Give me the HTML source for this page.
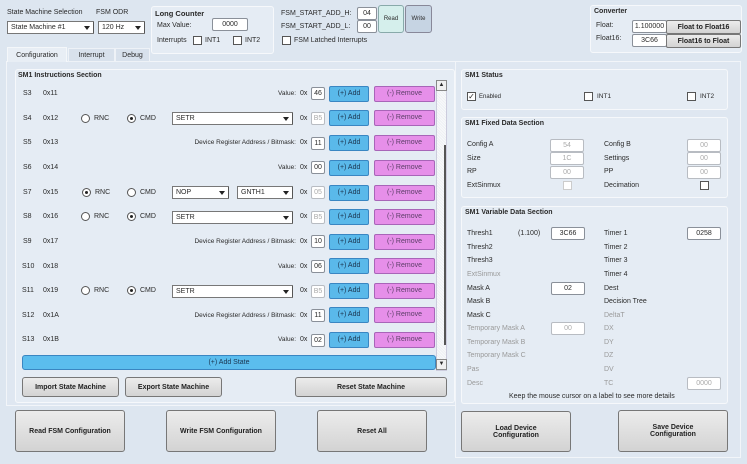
<!DOCTYPE html>
<html><head><meta charset="utf-8"><style>
*{box-sizing:border-box;margin:0;padding:0}
body{width:747px;height:464px;background:#dde6f0;font-family:"Liberation Sans",sans-serif;font-size:7px;color:#2a2a2a;position:relative;overflow:hidden}
.a{position:absolute;white-space:nowrap}
.r{position:absolute;white-space:nowrap;right:451px;font-size:6.5px}
.grp{position:absolute;background:#e5ecf4;border:1px solid #f6f8fb;border-radius:3px}
.b{font-weight:bold}
.in{position:absolute;background:#fff;border:1px solid #8a9099;border-radius:2px;text-align:center;font-size:7px;line-height:11px;height:13px}
.dis{color:#aaa;border-color:#b8bcc2}
.cb{position:absolute;width:9px;height:9px;background:#fff;border:1px solid #555}
.combo{position:absolute;background:#fff;border:1px solid #777;height:13px;font-size:7px;line-height:11px;padding-left:3px}
.combo:after{content:"";position:absolute;right:3px;top:4px;border-left:3px solid transparent;border-right:3px solid transparent;border-top:4px solid #222}
.combo:before{content:"";position:absolute;right:-3px;top:0;width:2px;height:11px;border-left:1px solid #555}
.add{position:absolute;width:40px;height:16px;background:#5ab9ea;border:1px solid #3a86c2;border-radius:2px;color:#1b3550;text-align:center;line-height:14px;font-size:7px}
.rem{position:absolute;width:61px;height:16px;background:#e68fe9;border:1px solid #a865b8;border-radius:2px;color:#5a3d66;text-align:center;line-height:14px;font-size:7px}
.rad{position:absolute;width:9px;height:9px;border-radius:50%;background:#fff;border:1px solid #555}
.rad.on:after{content:"";position:absolute;left:2px;top:2px;width:3px;height:3px;border-radius:50%;background:#222}
.btn{position:absolute;background:linear-gradient(#ececec,#d3d3d3);border:1px solid #777;border-radius:3px;font-weight:bold;text-align:center;font-size:7px;color:#222;display:flex;align-items:center;justify-content:center}
.g{color:#9a9a9a}
</style></head><body>

<div class="a" style="left:7px;top:9px">State Machine Selection</div>
<div class="a" style="left:96px;top:9px">FSM ODR</div>
<div class="combo" style="left:7px;top:21px;width:87px">State Machine #1</div>
<div class="combo" style="left:98px;top:21px;width:47px">120 Hz</div>

<div class="grp" style="left:151px;top:6px;width:123px;height:48px"></div>
<div class="a b" style="left:155px;top:9px;font-size:7.5px">Long Counter</div>
<div class="a" style="left:157px;top:22px">Max Value:</div>
<div class="in" style="left:212px;top:18px;width:36px">0000</div>
<div class="a" style="left:157px;top:37px">Interrupts</div>
<div class="cb" style="left:193px;top:36px"></div><div class="a" style="left:205px;top:37px">INT1</div>
<div class="cb" style="left:233px;top:36px"></div><div class="a" style="left:245px;top:37px">INT2</div>

<div class="a" style="left:281px;top:10px">FSM_START_ADD_H:</div>
<div class="a" style="left:281px;top:23px">FSM_START_ADD_L:</div>
<div class="in" style="left:357px;top:7px;width:20px">04</div>
<div class="in" style="left:357px;top:20px;width:20px">00</div>
<div class="a" style="left:378px;top:5px;width:26px;height:28px;background:#d5efec;border:1px solid #8aa;border-radius:3px;text-align:center;line-height:26px;font-size:6px">Read</div>
<div class="a" style="left:405px;top:5px;width:27px;height:28px;background:#c6d4e3;border:1px solid #889;border-radius:3px;text-align:center;line-height:26px;font-size:6px">Write</div>
<div class="cb" style="left:282px;top:36px"></div><div class="a" style="left:294px;top:37px">FSM Latched Interrupts</div>

<div class="grp" style="left:590px;top:5px;width:152px;height:48px"></div>
<div class="a b" style="left:594px;top:8px">Converter</div>
<div class="a" style="left:596px;top:22px">Float:</div>
<div class="a" style="left:596px;top:35px">Float16:</div>
<div class="in" style="left:632px;top:20px;width:35px">1.100000</div>
<div class="in" style="left:632px;top:34px;width:35px">3C66</div>
<div class="btn" style="left:666px;top:20px;width:75px;height:14px;border-radius:2px">Float to Float16</div>
<div class="btn" style="left:666px;top:34px;width:75px;height:14px;border-radius:2px">Float16 to Float</div>

<div class="a" style="left:6px;top:61px;width:452px;height:345px;border:1px solid #f2f5f9;background:#dfe7f1"></div>
<div class="a" style="left:7px;top:47px;width:60px;height:15px;background:#e8eef5;border:1px solid #f4f7fa;border-bottom:none;text-align:center;line-height:15px">Configuration</div>
<div class="a" style="left:68px;top:48px;width:47px;height:14px;background:#d8e1ec;border:1px solid #eef2f7;text-align:center;line-height:14px">Interrupt</div>
<div class="a" style="left:115px;top:48px;width:35px;height:14px;background:#d8e1ec;border:1px solid #eef2f7;text-align:center;line-height:14px">Debug</div>

<div class="grp" style="left:15px;top:69px;width:440px;height:334px"></div>
<div class="a b" style="left:18px;top:72px">SM1 Instructions Section</div>

<div class="a" style="left:436px;top:80px;width:11px;height:291px;background:repeating-linear-gradient(45deg,#eef1f4 0 1px,#f8f9fb 1px 2px);border:1px solid #ccd"></div>
<div class="a" style="left:436px;top:80px;width:11px;height:11px;background:#f0f0f0;border:1px solid #888;font-size:6px;text-align:center;line-height:9px">▲</div>
<div class="a" style="left:436px;top:359px;width:11px;height:11px;background:#f0f0f0;border:1px solid #888;font-size:6px;text-align:center;line-height:9px">▼</div>
<div class="a" style="left:444px;top:145px;width:2px;height:200px;background:#555"></div>

<div class="a" style="left:23px;top:90px">S3</div><div class="a" style="left:43px;top:90px">0x11</div>
<div class="r" style="top:90px">Value:</div>
<div class="a" style="left:300px;top:90px">0x</div><div class="in" style="left:311px;top:87px;width:14px">46</div>
<div class="add" style="left:329px;top:86px">(+) Add</div><div class="rem" style="left:374px;top:86px">(-) Remove</div>

<div class="a" style="left:23px;top:115px">S4</div><div class="a" style="left:43px;top:115px">0x12</div>
<div class="rad" style="left:81px;top:114px"></div><div class="a" style="left:94px;top:115px">RNC</div>
<div class="rad on" style="left:127px;top:114px"></div><div class="a" style="left:140px;top:115px">CMD</div>
<div class="combo" style="left:172px;top:112px;width:121px">SETR</div>
<div class="a" style="left:300px;top:115px">0x</div><div class="in dis" style="left:311px;top:112px;width:14px">B5</div>
<div class="add" style="left:329px;top:110px">(+) Add</div><div class="rem" style="left:374px;top:110px">(-) Remove</div>

<div class="a" style="left:23px;top:139px">S5</div><div class="a" style="left:43px;top:139px">0x13</div>
<div class="r" style="top:139px">Device Register Address / Bitmask:</div>
<div class="a" style="left:300px;top:139px">0x</div><div class="in" style="left:311px;top:137px;width:14px">11</div>
<div class="add" style="left:329px;top:135px">(+) Add</div><div class="rem" style="left:374px;top:135px">(-) Remove</div>

<div class="a" style="left:23px;top:164px">S6</div><div class="a" style="left:43px;top:164px">0x14</div>
<div class="r" style="top:164px">Value:</div>
<div class="a" style="left:300px;top:164px">0x</div><div class="in" style="left:311px;top:161px;width:14px">00</div>
<div class="add" style="left:329px;top:160px">(+) Add</div><div class="rem" style="left:374px;top:160px">(-) Remove</div>

<div class="a" style="left:23px;top:189px">S7</div><div class="a" style="left:43px;top:189px">0x15</div>
<div class="rad on" style="left:82px;top:188px"></div><div class="a" style="left:95px;top:189px">RNC</div>
<div class="rad" style="left:127px;top:188px"></div><div class="a" style="left:140px;top:189px">CMD</div>
<div class="combo" style="left:172px;top:186px;width:57px">NOP</div>
<div class="combo" style="left:237px;top:186px;width:56px">GNTH1</div>
<div class="a" style="left:300px;top:189px">0x</div><div class="in dis" style="left:311px;top:186px;width:14px">05</div>
<div class="add" style="left:329px;top:185px">(+) Add</div><div class="rem" style="left:374px;top:185px">(-) Remove</div>

<div class="a" style="left:23px;top:213px">S8</div><div class="a" style="left:43px;top:213px">0x16</div>
<div class="rad" style="left:81px;top:212px"></div><div class="a" style="left:94px;top:213px">RNC</div>
<div class="rad on" style="left:127px;top:212px"></div><div class="a" style="left:140px;top:213px">CMD</div>
<div class="combo" style="left:172px;top:211px;width:121px">SETR</div>
<div class="a" style="left:300px;top:213px">0x</div><div class="in dis" style="left:311px;top:211px;width:14px">B5</div>
<div class="add" style="left:329px;top:209px">(+) Add</div><div class="rem" style="left:374px;top:209px">(-) Remove</div>

<div class="a" style="left:23px;top:238px">S9</div><div class="a" style="left:43px;top:238px">0x17</div>
<div class="r" style="top:238px">Device Register Address / Bitmask:</div>
<div class="a" style="left:300px;top:238px">0x</div><div class="in" style="left:311px;top:235px;width:14px">10</div>
<div class="add" style="left:329px;top:234px">(+) Add</div><div class="rem" style="left:374px;top:234px">(-) Remove</div>

<div class="a" style="left:22px;top:263px">S10</div><div class="a" style="left:43px;top:263px">0x18</div>
<div class="r" style="top:263px">Value:</div>
<div class="a" style="left:300px;top:263px">0x</div><div class="in" style="left:311px;top:260px;width:14px">06</div>
<div class="add" style="left:329px;top:258px">(+) Add</div><div class="rem" style="left:374px;top:258px">(-) Remove</div>

<div class="a" style="left:22px;top:287px">S11</div><div class="a" style="left:43px;top:287px">0x19</div>
<div class="rad" style="left:81px;top:286px"></div><div class="a" style="left:94px;top:287px">RNC</div>
<div class="rad on" style="left:127px;top:286px"></div><div class="a" style="left:140px;top:287px">CMD</div>
<div class="combo" style="left:172px;top:285px;width:121px">SETR</div>
<div class="a" style="left:300px;top:287px">0x</div><div class="in dis" style="left:311px;top:285px;width:14px">B5</div>
<div class="add" style="left:329px;top:283px">(+) Add</div><div class="rem" style="left:374px;top:283px">(-) Remove</div>

<div class="a" style="left:22px;top:312px">S12</div><div class="a" style="left:43px;top:312px">0x1A</div>
<div class="r" style="top:312px">Device Register Address / Bitmask:</div>
<div class="a" style="left:300px;top:312px">0x</div><div class="in" style="left:311px;top:309px;width:14px">11</div>
<div class="add" style="left:329px;top:307px">(+) Add</div><div class="rem" style="left:374px;top:307px">(-) Remove</div>

<div class="a" style="left:22px;top:336px">S13</div><div class="a" style="left:43px;top:336px">0x1B</div>
<div class="r" style="top:336px">Value:</div>
<div class="a" style="left:300px;top:336px">0x</div><div class="in" style="left:311px;top:334px;width:14px">02</div>
<div class="add" style="left:329px;top:332px">(+) Add</div><div class="rem" style="left:374px;top:332px">(-) Remove</div>

<div class="a" style="left:22px;top:355px;width:414px;height:15px;background:#5bbdee;border:1px solid #3a86c2;border-radius:3px;text-align:center;line-height:13px;color:#1b3550">(+) Add State</div>

<div class="btn" style="left:22px;top:377px;width:97px;height:20px">Import State Machine</div>
<div class="btn" style="left:125px;top:377px;width:97px;height:20px">Export State Machine</div>
<div class="btn" style="left:295px;top:377px;width:152px;height:20px">Reset State Machine</div>

<div class="btn" style="left:15px;top:410px;width:110px;height:42px">Read FSM Configuration</div>
<div class="btn" style="left:166px;top:410px;width:110px;height:42px">Write FSM Configuration</div>
<div class="btn" style="left:317px;top:410px;width:110px;height:42px">Reset All</div>

<div class="a" style="left:455px;top:61px;width:286px;height:397px;border:1px solid #f2f5f9;background:#dfe7f1"></div>
<div class="grp" style="left:461px;top:69px;width:267px;height:41px"></div>
<div class="a b" style="left:465px;top:72px">SM1 Status</div>
<div class="cb" style="left:467px;top:92px;font-size:8px;line-height:7px;text-align:center">✓</div><div class="a" style="left:479px;top:94px;font-size:6px">Enabled</div>
<div class="cb" style="left:584px;top:92px"></div><div class="a" style="left:597px;top:93px;font-size:6.5px">INT1</div>
<div class="cb" style="left:687px;top:92px"></div><div class="a" style="left:700px;top:93px;font-size:6.5px">INT2</div>

<div class="grp" style="left:461px;top:117px;width:267px;height:81px"></div>
<div class="a b" style="left:465px;top:120px">SM1 Fixed Data Section</div>
<div class="a" style="left:467px;top:141px">Config A</div><div class="in dis" style="left:550px;top:139px;width:34px">54</div>
<div class="a" style="left:604px;top:141px">Config B</div><div class="in dis" style="left:687px;top:139px;width:34px">00</div>
<div class="a" style="left:467px;top:155px">Size</div><div class="in dis" style="left:550px;top:152px;width:34px">1C</div>
<div class="a" style="left:604px;top:155px">Settings</div><div class="in dis" style="left:687px;top:152px;width:34px">00</div>
<div class="a" style="left:467px;top:168px">RP</div><div class="in dis" style="left:550px;top:166px;width:34px">00</div>
<div class="a" style="left:604px;top:168px">PP</div><div class="in dis" style="left:687px;top:166px;width:34px">00</div>
<div class="a" style="left:467px;top:182px">ExtSinmux</div><div class="cb" style="left:563px;top:181px;border-color:#ccc"></div>
<div class="a" style="left:604px;top:182px">Decimation</div><div class="cb" style="left:700px;top:181px"></div>

<div class="grp" style="left:461px;top:206px;width:267px;height:198px"></div>
<div class="a b" style="left:465px;top:209px">SM1 Variable Data Section</div>
<div class="a" style="left:467px;top:230px">Thresh1</div><div class="a" style="left:518px;top:230px">(1.100)</div>
<div class="in" style="left:551px;top:227px;width:34px">3C66</div>
<div class="a" style="left:604px;top:230px">Timer 1</div><div class="in" style="left:687px;top:227px;width:34px">0258</div>
<div class="a" style="left:467px;top:244px">Thresh2</div><div class="a" style="left:604px;top:244px">Timer 2</div>
<div class="a" style="left:467px;top:257px">Thresh3</div><div class="a" style="left:604px;top:257px">Timer 3</div>
<div class="a g" style="left:467px;top:271px">ExtSinmux</div><div class="a" style="left:604px;top:271px">Timer 4</div>
<div class="a" style="left:467px;top:285px">Mask A</div><div class="in" style="left:551px;top:282px;width:34px">02</div><div class="a" style="left:604px;top:285px">Dest</div>
<div class="a" style="left:467px;top:298px">Mask B</div><div class="a" style="left:604px;top:298px">Decision Tree</div>
<div class="a" style="left:467px;top:312px">Mask C</div><div class="a g" style="left:604px;top:312px">DeltaT</div>
<div class="a g" style="left:467px;top:325px">Temporary Mask A</div><div class="in dis" style="left:551px;top:322px;width:34px">00</div><div class="a g" style="left:604px;top:325px">DX</div>
<div class="a g" style="left:467px;top:339px">Temporary Mask B</div><div class="a g" style="left:604px;top:339px">DY</div>
<div class="a g" style="left:467px;top:352px">Temporary Mask C</div><div class="a g" style="left:604px;top:352px">DZ</div>
<div class="a g" style="left:467px;top:366px">Pas</div><div class="a g" style="left:604px;top:366px">DV</div>
<div class="a g" style="left:467px;top:380px">Desc</div><div class="a g" style="left:604px;top:380px">TC</div><div class="in dis" style="left:687px;top:377px;width:34px">0000</div>
<div class="a" style="left:509px;top:393px">Keep the mouse cursor on a label to see more details</div>

<div class="btn" style="left:461px;top:411px;width:110px;height:41px">Load Device<br>Configuration</div>
<div class="btn" style="left:618px;top:410px;width:110px;height:42px">Save Device<br>Configuration</div>

</body></html>
